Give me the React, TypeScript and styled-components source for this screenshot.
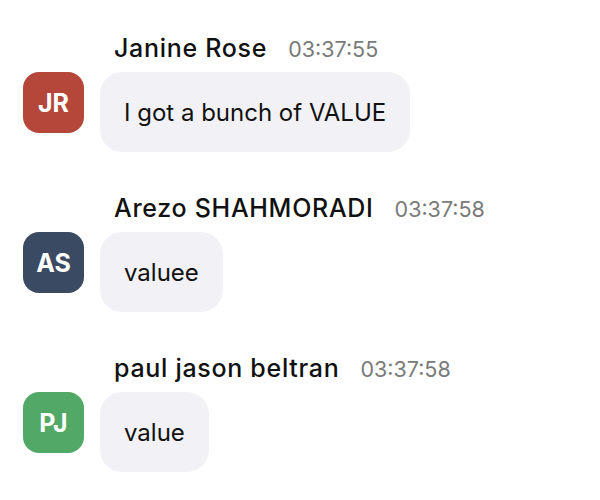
import React from "react";
import styled, { createGlobalStyle } from "styled-components";

interface IMessage {
  initials: string;
  color: string;
  name: string;
  time: string;
  text: string;
}

const messages: IMessage[] = [
  { initials: "JR", color: "#b5473a", name: "Janine Rose", time: "03:37:55", text: "I got a bunch of VALUE" },
  { initials: "AS", color: "#3b4a63", name: "Arezo SHAHMORADI", time: "03:37:58", text: "valuee" },
  { initials: "PJ", color: "#52a866", name: "paul jason beltran", time: "03:37:58", text: "value" },
];

const App = () => {
  return (
    <>
      <GlobalStyle />
      <MessageList>
        {messages.map((m, i) => (
          <Message key={i}>
            <Header>
              <Name>{m.name}</Name>
              <Time>{m.time}</Time>
            </Header>
            <Avatar color={m.color}>{m.initials}</Avatar>
            <Bubble>{m.text}</Bubble>
          </Message>
        ))}
      </MessageList>
    </>
  );
};

const GlobalStyle = createGlobalStyle`
  body {
    margin: 0;
    background: #fff;
    font-family: Inter, "Noto Sans", sans-serif;
    color: #111;
  }
`;

const MessageList = styled.div`
  display: flex;
  flex-direction: column;
  gap: 41px;
  padding: 33px 0 0 23px;
`;

const Message = styled.div`
  display: grid;
  grid-template-columns: 61px auto;
  justify-content: start;
  column-gap: 16px;
  row-gap: 9px;
  align-items: start;
`;

const Header = styled.div`
  grid-column: 2;
  display: flex;
  align-items: baseline;
  gap: 21px;
  height: 30px;
  line-height: 30px;
  padding-left: 14px;
  white-space: nowrap;
`;

const Name = styled.span`
  font-size: 25px;
  font-weight: 500;
  letter-spacing: 0.7px;
  color: #111;
`;

const Time = styled.span`
  font-size: 21.5px;
  color: #7a7a7a;
`;

const Avatar = styled.div<{ color: string }>`
  grid-column: 1;
  width: 61px;
  height: 61px;
  border-radius: 16px;
  background-color: ${(p) => p.color};
  color: #fff;
  display: flex;
  align-items: center;
  justify-content: center;
  font-size: 25px;
  font-weight: 700;
`;

const Bubble = styled.div`
  grid-column: 2;
  justify-self: start;
  display: flex;
  align-items: center;
  height: 80px;
  padding: 0 24px;
  box-sizing: border-box;
  border-radius: 22px;
  background-color: #f2f2f6;
  font-size: 24px;
  color: #111;
`;

export default App;
